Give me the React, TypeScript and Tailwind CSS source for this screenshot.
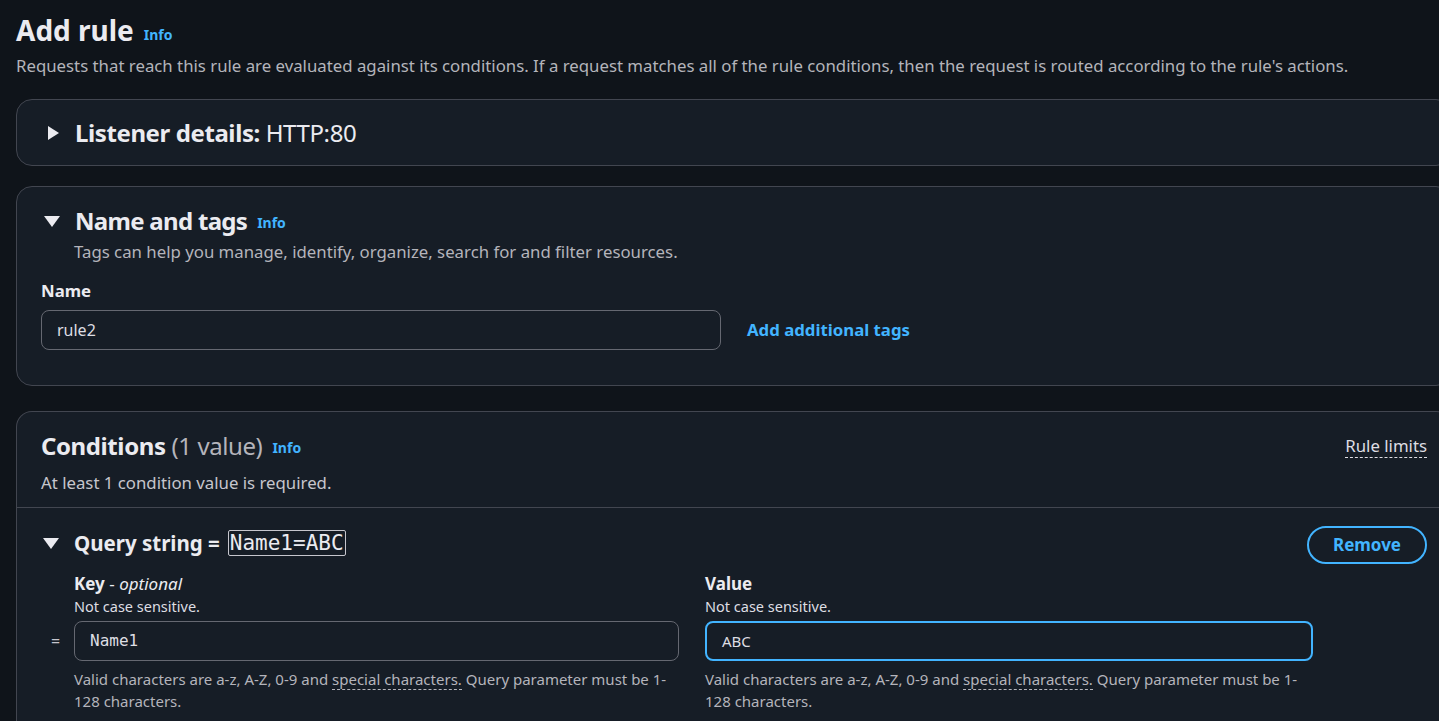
import React from "react";

const CaretRight = () => (
  <svg width="14" height="16" viewBox="0 0 14 16" className="shrink-0">
    <polygon points="1,1 12,8 1,15" fill="#ebebf0" />
  </svg>
);

const CaretDown = () => (
  <svg width="16" height="14" viewBox="0 0 16 14" className="shrink-0">
    <polygon points="0,2 16,2 8,13" fill="#ebebf0" />
  </svg>
);

const Info = () => (
  <span className="text-[14px] font-bold text-[#42b4ff] ml-2.5 self-end mb-[3px] tracking-normal">Info</span>
);

const font = { fontFamily: '"Noto Sans", "Open Sans", Arial, sans-serif' };
const mono = '"DejaVu Sans Mono", "Liberation Mono", monospace';

const HelperText = () => (
  <p className="text-[15px] leading-[22px] text-[#b4b4bb] mt-[7px]">
    Valid characters are a-z, A-Z, 0-9 and{" "}
    <span className="border-b border-dashed border-[#b4b4bb]">special characters.</span> Query
    parameter must be 1-128 characters.
  </p>
);

export default function App() {
  return (
    <div className="w-[1439px] h-[721px] overflow-hidden bg-[#0f141a] text-[#c6c6cd]" style={font}>
      <div className="w-[1452px] pl-4 pt-[12px]">
        {/* Header */}
        <div className="flex items-end">
          <h1 className="text-[28px] leading-[36px] font-bold text-[#ebebf0]">Add rule</h1>
          <Info />
        </div>
        <p className="text-[16.8px] leading-[24px] text-[#b4b4bb] mt-[6px]">
          Requests that reach this rule are evaluated against its conditions. If a request matches all of the rule
          conditions, then the request is routed according to the rule's actions.
        </p>

        {/* Listener details */}
        <div className="mt-[21px] rounded-2xl border border-[#424650] bg-[#161d26] h-[67px] flex items-center gap-[14px] pl-[30px]">
          <CaretRight />
          <h2 className="text-[24px] leading-[30px] text-[#ebebf0] tracking-[-0.4px]">
            <span className="font-bold">Listener details:</span> HTTP:80
          </h2>
        </div>

        {/* Name and tags */}
        <div className="mt-[20px] rounded-2xl border border-[#424650] bg-[#161d26] px-6 pt-[19px] pb-[35px]">
          <div className="flex items-center gap-[15px] pl-[3px]">
            <CaretDown />
            <div className="flex items-end">
              <h2 className="text-[24px] leading-[30px] font-bold text-[#ebebf0] tracking-[-0.7px]">Name and tags</h2>
              <Info />
            </div>
          </div>
          <p className="text-[16.8px] leading-[24px] text-[#b4b4bb] pl-[33px] mt-[4px]">
            Tags can help you manage, identify, organize, search for and filter resources.
          </p>
          <div className="mt-[16px] text-[16.8px] leading-[22px] font-bold text-[#ebebf0]">Name</div>
          <div className="flex items-center gap-[26px] mt-[8px]">
            <div className="w-[680px] h-[40px] rounded-lg border border-[#656871] flex items-center px-[15px] text-[16px] text-[#dedee3]">
              rule2
            </div>
            <span className="text-[16.8px] font-bold text-[#42b4ff]">Add additional tags</span>
          </div>
        </div>

        {/* Conditions */}
        <div className="mt-[25px] rounded-t-2xl border border-b-0 border-[#424650] bg-[#161d26] h-[400px]">
          <div className="px-6 pt-[19px] pb-[12px] flex justify-between items-start">
            <div>
              <div className="flex items-end">
                <h2 className="text-[24px] leading-[30px] text-[#ebebf0] tracking-[-0.4px]">
                  <span className="font-bold">Conditions</span>{" "}
                  <span className="text-[#b4b4bb]">(1 value)</span>
                </h2>
                <Info />
              </div>
              <p className="text-[16.8px] leading-[24px] text-[#c6c6cd] mt-[10px]">
                At least 1 condition value is required.
              </p>
            </div>
            <span className="mt-[4px] text-[16.8px] leading-[22px] text-[#dedee3] border-b border-dashed border-[#dedee3]">
              Rule limits
            </span>
          </div>

          <div className="border-t border-[#424650] px-6 pt-[14px]">
            <div className="flex justify-between items-center">
              <div className="flex items-center gap-[15px] pl-[2px]">
                <CaretDown />
                <h3 className="text-[20.5px] leading-[28px] font-bold text-[#ebebf0] flex items-center gap-[8px]">
                  Query string =
                  <span
                    className="font-normal border border-[#c6c6cd] rounded-[2px] px-[1px] leading-[24px]"
                    style={{ fontFamily: mono, fontSize: 21 }}
                  >
                    Name1=ABC
                  </span>
                </h3>
              </div>
              <button className="w-[120px] h-[38px] mt-[4px] rounded-full border-2 border-[#42b4ff] text-[#42b4ff] text-[17px] font-bold">
                Remove
              </button>
            </div>

            <div className="flex mt-[9px]">
              <div className="w-[33px] shrink-0" />
              <div className="w-[605px]">
                <div className="text-[17px] leading-[22px] text-[#ebebf0]">
                  <span className="font-bold">Key</span> - <i>optional</i>
                </div>
                <div className="text-[14.5px] leading-[20px] text-[#dedee3] mt-[1px]">Not case sensitive.</div>
                <div className="relative mt-[5px] h-[40px] rounded-lg border border-[#656871] flex items-center px-[15px] text-[#dedee3]">
                  <span className="absolute -left-[24px] text-[16px] text-[#c6c6cd]">=</span>
                  <span style={{ fontFamily: mono, fontSize: 16 }}>Name1</span>
                </div>
                <HelperText />
              </div>
              <div className="w-[26px] shrink-0" />
              <div className="w-[608px]">
                <div className="text-[17px] leading-[22px] font-bold text-[#ebebf0]">Value</div>
                <div className="text-[14.5px] leading-[20px] text-[#dedee3] mt-[1px]">Not case sensitive.</div>
                <div className="mt-[5px] h-[40px] rounded-lg border-2 border-[#42b4ff] flex items-center px-[15px] text-[15px] text-[#dedee3]">
                  ABC
                </div>
                <HelperText />
              </div>
            </div>
          </div>
        </div>
      </div>
    </div>
  );
}
